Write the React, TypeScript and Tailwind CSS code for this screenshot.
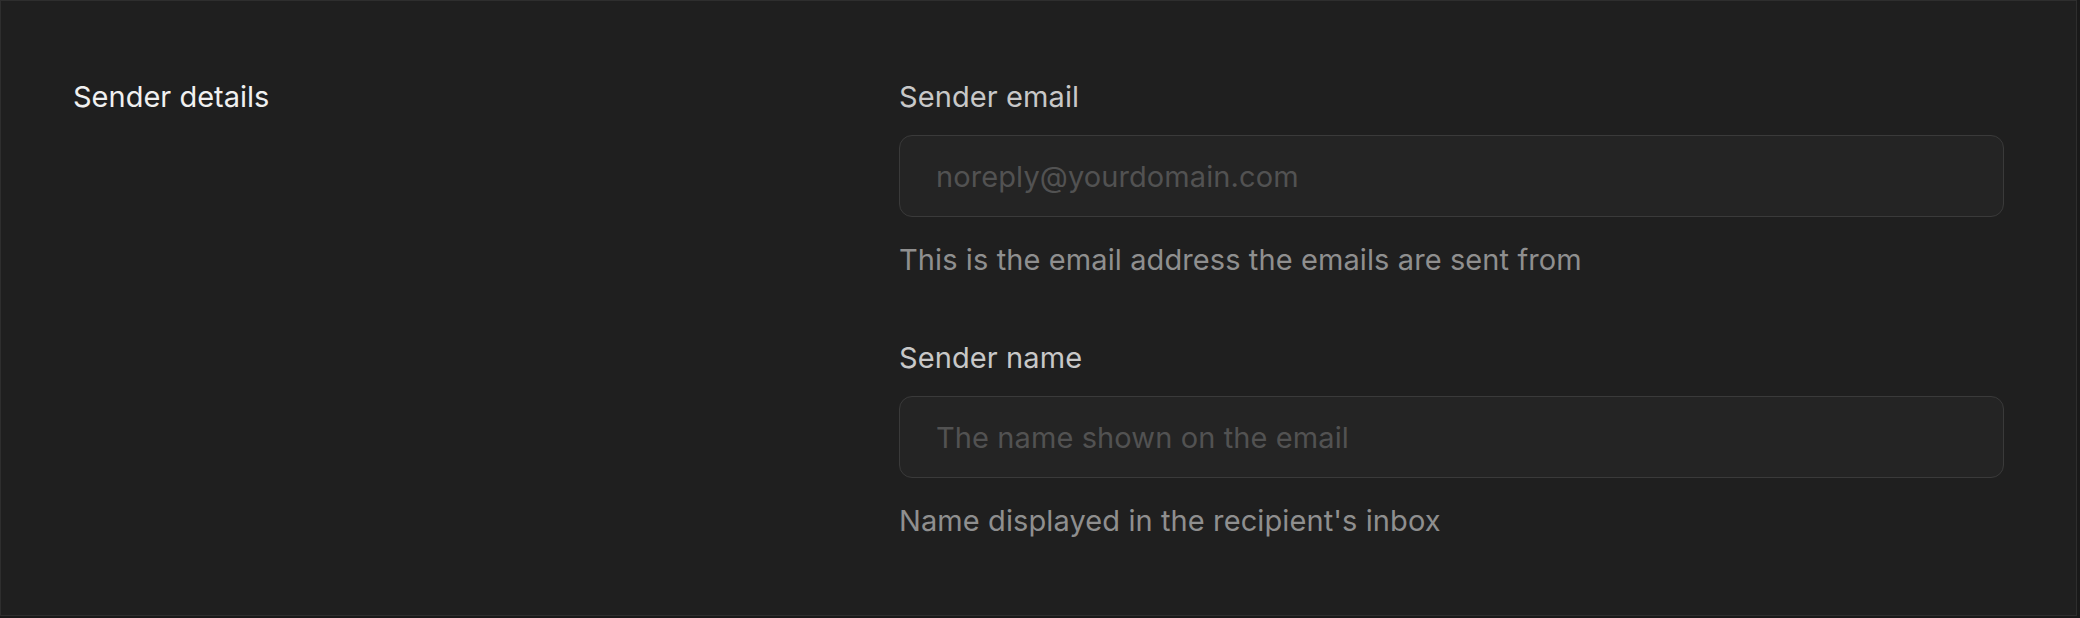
import React from "react";

function Field({ label, placeholder, help }: { label: string; placeholder: string; help: string }) {
  return (
    <div className="flex flex-col">
      <label className="text-[29px] leading-[40px] tracking-[0.1px] text-[#c8c8c8]">{label}</label>
      <input
        className="mt-[18px] h-[82px] w-full rounded-[13px] border border-[#3a3a3a] bg-[#242424] px-[36px] text-[29px] tracking-[0.1px] text-[#e0e0e0] outline-none placeholder:text-[#525252]"
        placeholder={placeholder}
      />
      <p className="mt-[23px] text-[29px] leading-[40px] tracking-[0.1px] text-[#8f8f8f]">{help}</p>
    </div>
  );
}

export default function App() {
  return (
    <div className="h-[618px] w-[2080px] bg-[#191919]" style={{ fontFamily: "Inter, 'Noto Sans', sans-serif" }}>
      <div className="flex h-[616px] w-[2077px] border border-[#2e2e2e] bg-[#1f1f1f] px-[72px] pt-[76px]">
        <div className="w-[826px] shrink-0">
          <h3 className="text-[29px] leading-[40px] text-[#f0f0f0]">Sender details</h3>
        </div>
        <div className="flex flex-1 flex-col gap-[58px]">
          <Field label="Sender email" placeholder="noreply@yourdomain.com" help="This is the email address the emails are sent from" />
          <Field label="Sender name" placeholder="The name shown on the email" help="Name displayed in the recipient's inbox" />
        </div>
      </div>
    </div>
  );
}
